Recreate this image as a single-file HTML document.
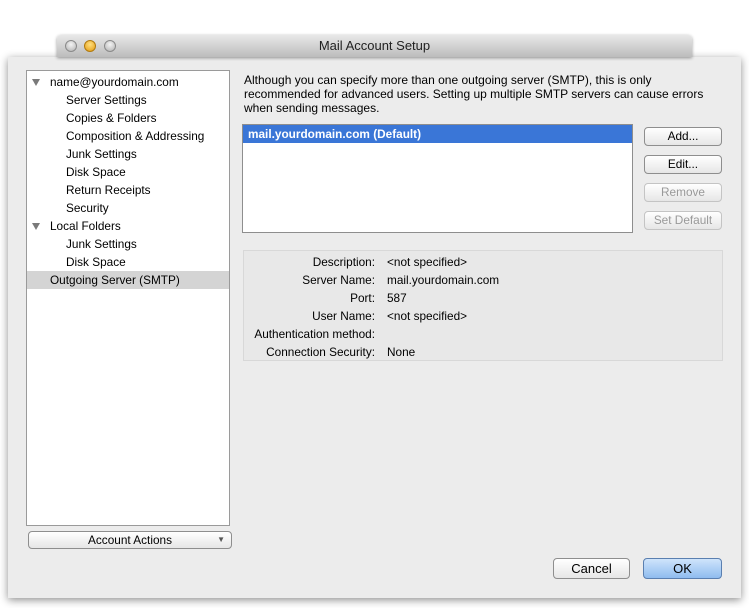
<!DOCTYPE html><html><head><style>
*{margin:0;padding:0;box-sizing:border-box}
body{width:749px;height:608px;background:#fff;font-family:"Liberation Sans",sans-serif;font-size:12px;color:#000;position:relative;overflow:hidden}
.a{position:absolute}
.dlg{left:8px;top:57px;width:733px;height:541px;background:#ececec;box-shadow:0 2px 8px rgba(0,0,0,.45)}
.title{left:57px;top:35px;width:635px;height:22px;background:linear-gradient(#e8e8e8,#bcbcbc);border-radius:4px 4px 0 0;box-shadow:0 1px 3px rgba(0,0,0,.4);text-align:center;font-size:13px;line-height:22px;color:#222}
.dot{width:12px;height:12px;border-radius:50%;top:5px;background:radial-gradient(circle at 50% 35%,#f4f4f4,#b0b0b0);border:1px solid #8a8a8a}
.list{left:26px;top:70px;width:204px;height:456px;background:#fff;border:1px solid #9a9a9a}
.row{position:absolute;left:0;width:202px;height:18px;line-height:18px;font-size:11.8px;white-space:nowrap}
.tri{position:absolute;left:5px;top:6px;width:0;height:0;border-left:4px solid transparent;border-right:4px solid transparent;border-top:7px solid #7a7a7a}
.btn{position:absolute;background:linear-gradient(#fff,#e6e6e6);border:1px solid #8e8e8e;border-radius:4px;text-align:center;font-size:11.8px;line-height:17px}
.dis{color:#999;border-color:#c4c4c4}
.lab{position:absolute;width:140px;text-align:right;left:235px;font-size:11.8px}
.val{position:absolute;left:387px;font-size:11.8px}
</style></head><body>
<div class="a dlg"></div>
<div class="a title">Mail Account Setup
<div class="a dot" style="left:8px"></div>
<div class="a dot" style="left:27px;background:radial-gradient(circle at 50% 35%,#ffe080,#e49a10);border-color:#b07a10"></div>
<div class="a dot" style="left:47px"></div></div>
<div class="a list">
<div class="row" style="top:2px;padding-left:23px"><span class="tri"></span>name@yourdomain.com</div>
<div class="row" style="top:20px;padding-left:39px">Server Settings</div>
<div class="row" style="top:38px;padding-left:39px">Copies &amp; Folders</div>
<div class="row" style="top:56px;padding-left:39px">Composition &amp; Addressing</div>
<div class="row" style="top:74px;padding-left:39px">Junk Settings</div>
<div class="row" style="top:92px;padding-left:39px">Disk Space</div>
<div class="row" style="top:110px;padding-left:39px">Return Receipts</div>
<div class="row" style="top:128px;padding-left:39px">Security</div>
<div class="row" style="top:146px;padding-left:23px"><span class="tri"></span>Local Folders</div>
<div class="row" style="top:164px;padding-left:39px">Junk Settings</div>
<div class="row" style="top:182px;padding-left:39px">Disk Space</div>
<div class="row" style="top:200px;padding-left:23px;background:#d4d4d4">Outgoing Server (SMTP)</div>
</div>
<div class="btn" style="left:28px;top:531px;width:204px;height:18px;line-height:16px">Account Actions<span class="a" style="right:6px;top:0;font-size:8px;color:#555">▼</span></div>
<div class="a" style="left:244px;top:73px;width:480px;font-size:12px;line-height:14px;white-space:nowrap">Although you can specify more than one outgoing server (SMTP), this is only<br>recommended for advanced users. Setting up multiple SMTP servers can cause errors<br>when sending messages.</div>
<div class="a" style="left:242px;top:124px;width:391px;height:109px;background:#fff;border:1px solid #8e8e8e">
<div style="background:#3a76d7;color:#fff;height:18px;line-height:18px;padding-left:5px;font-size:11.8px;font-weight:bold">mail.yourdomain.com (Default)</div></div>
<div class="btn" style="left:644px;top:127px;width:78px;height:19px">Add...</div>
<div class="btn" style="left:644px;top:155px;width:78px;height:19px">Edit...</div>
<div class="btn dis" style="left:644px;top:183px;width:78px;height:19px">Remove</div>
<div class="btn dis" style="left:644px;top:211px;width:78px;height:19px">Set Default</div>
<div class="a" style="left:243px;top:250px;width:480px;height:111px;background:#e8e8e8;border:1px solid #d8d8d8"></div>
<div class="lab" style="top:255px">Description:</div><div class="val" style="top:255px">&lt;not specified&gt;</div>
<div class="lab" style="top:273px">Server Name:</div><div class="val" style="top:273px">mail.yourdomain.com</div>
<div class="lab" style="top:291px">Port:</div><div class="val" style="top:291px">587</div>
<div class="lab" style="top:309px">User Name:</div><div class="val" style="top:309px">&lt;not specified&gt;</div>
<div class="lab" style="top:327px">Authentication method:</div>
<div class="lab" style="top:345px">Connection Security:</div><div class="val" style="top:345px">None</div>
<div class="btn" style="left:553px;top:558px;width:77px;height:21px;line-height:19px;font-size:13px">Cancel</div>
<div class="btn" style="left:643px;top:558px;width:79px;height:21px;line-height:19px;font-size:13px;background:linear-gradient(#cfe4fb,#8fbcef);border-color:#5a7fb0">OK</div>
</body></html>
